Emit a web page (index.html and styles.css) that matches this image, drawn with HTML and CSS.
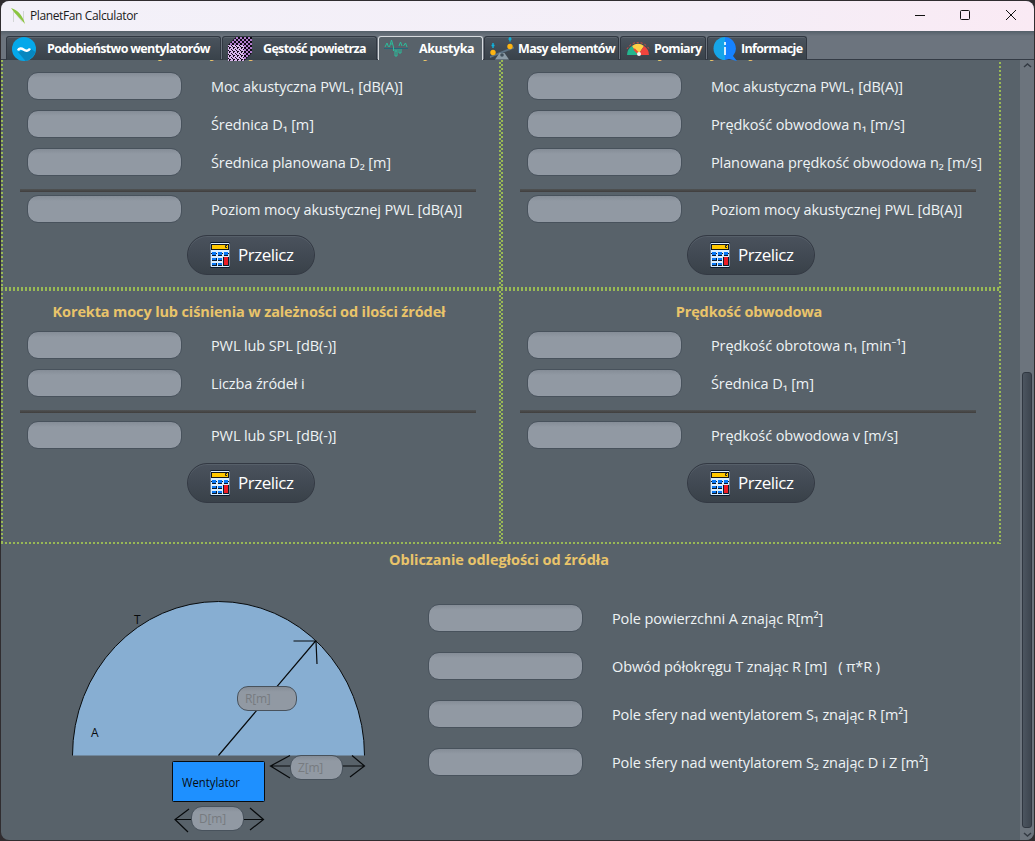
FILE: index.html
```html
<!DOCTYPE html>
<html lang="pl">
<head>
<meta charset="utf-8">
<title>PlanetFan Calculator</title>
<link rel="stylesheet" href="styles.css">
</head>
<body>
<svg class="defs" aria-hidden="true">
  <symbol id="calc" viewBox="0 0 22 28">
    <rect x="1" y="1" width="20" height="26" rx="1.500" fill="#0b1a2c"/>
    <rect x="1.500" y="2" width="19" height="24" rx="1" fill="#d9edff"/>
    <rect x="2" y="3" width="18" height="6" fill="#10151c"/>
    <rect x="3" y="4" width="16" height="4" fill="#ffc800"/>
    <path d="M18 4.500h-1.500v2H18" stroke="#222" fill="none"/>
    <path d="M3 11h4v4H3zM9 11h4v4H9zM15 11h4v4h-4zM3 17h5v3H3zM9 17h4v3H9zM3 22h5v3H3zM9 22h4v3H9zM14 16h6v9h-6z" fill="#0b1a2c"/>
    <path d="M3 11h4v3H3zM9 11h4v3H9zM15 11h4v3h-4zM3 17h4v2H3zM9 17h4v2H9zM3 22h4v2H3zM9 22h4v2H9z" fill="#0878f5"/>
    <path d="M2 12h1v1H2zM7 12h1v1H7zM13 12h1v1h-1zM19 12h1v1h-1z" fill="#0b1a2c"/>
    <rect x="15" y="16" width="4" height="8" fill="#ed1c24"/>
  </symbol>
  <pattern id="mesh" width="4" height="4" patternUnits="userSpaceOnUse">
    <rect width="4" height="4" fill="#d9b6ea"/>
    <path d="M3 0h1v1H3zM0 1h1v1H0zM1 2h2v1H1zM1 3h1v1H1z" fill="#120a18"/>
  </pattern>
  <pattern id="meshdark" width="4" height="4" patternUnits="userSpaceOnUse">
    <rect width="4" height="4" fill="#0d0812"/>
    <path d="M0 0h2v2H0zM2 2h2v2H2z" fill="#b27dce"/>
  </pattern>
</svg>
<div class="window">
  <header class="titlebar">
    <svg class="logo" width="16" height="18" viewBox="0 0 16 18"><path d="M3.500 15V4M3.500 4l9 11M13.500 4v11" stroke="#d3d6d5" fill="none"/><path d="M1 1c7 2 12 8 14 16C12 13 6 8 1 1z" fill="#8bc53f"/></svg>
    <span class="app-name">PlanetFan Calculator</span>
    <svg class="controls" width="104" height="14" viewBox="0 0 104 14" fill="none" stroke="#111"><path d="M1 7.500h10"/><rect x="46.500" y="2.500" width="9" height="9" rx="1"/><path d="M92 2l10 10M102 2L92 12"/></svg>
  </header>
  <nav class="tabs">
    <div class="tab t1"><svg width="24" height="24" viewBox="0 0 24 24"><circle cx="12" cy="12" r="12" fill="#05a8ea"/><path d="M6 15l13-3 4.500 3c-2 5-6 8-10 9z" fill="#0787bf"/><path d="M6 13.500c1-2.500 3.500-2.500 5.500-1s5 2 6.500-1" fill="none" stroke="#fff" stroke-width="2.400"/></svg><span>Podobieństwo wentylatorów</span></div>
    <div class="tab t2"><svg width="24" height="24" viewBox="0 0 24 24"><path d="M8 0h16v16l-8 8V8H0z" fill="url(#meshdark)"/><path d="M0 8h16v16H0z" fill="url(#mesh)"/></svg><span>Gęstość powietrza</span></div>
    <div class="tab t3 active"><svg width="24" height="24" viewBox="0 0 24 24"><path d="M0 11.500h24" stroke="#25677a"/><path d="M1 10l2-4 1.500 4M5.500 10l2-7 2 7v4M15 9l1.500-4L18 9M19.500 9l2-3 1.500 4M11 12v7h2v-7M15 12v4h2v-4M6.500 7h2M11 14h2" fill="none" stroke="#2bbd9b"/></svg><span>Akustyka</span></div>
    <div class="tab t4"><svg width="24" height="24" viewBox="0 0 24 24"><path d="M0 19L24 9.500v2L0 21z" fill="#5b7284"/><path d="M9.500 16h5l4.500 6.500H5z" fill="#8b9ba6"/><circle cx="12" cy="18" r="1.800" fill="#40505c"/><circle cx="3" cy="15.500" r="2.700" fill="#ffb511"/><circle cx="20" cy="9.500" r="2.700" fill="#ffb511"/><path d="M3 6v5M1.500 8.500h3M20 0v4.500M18.500 2h3" stroke="#10b5df" stroke-width="1.400"/></svg><span>Masy elementów</span></div>
    <div class="tab t5"><svg width="24" height="24" viewBox="0 0 24 24"><path d="M1 18a11 11 0 0 1 5-9l6 9z" fill="#24b58e"/><path d="M6 9a10 10 0 0 1 12 0l-6 9z" fill="#ffd046"/><path d="M18 9a11 11 0 0 1 5 9H12z" fill="#f0443d"/><path d="M1 12a12.500 12.500 0 0 1 22 0" fill="none" stroke="#e74c3c" stroke-dasharray="2 2"/><path d="M8 12l5 5" stroke="#e84a38" stroke-width="2"/><circle cx="13" cy="17" r="2" fill="#f0f7f8"/></svg><span>Pomiary</span></div>
    <div class="tab t6"><svg width="24" height="24" viewBox="0 0 24 24"><path d="M12 0a11.500 11.500 0 0 0 0 23z" fill="#16a5e8"/><path d="M12 0a11.500 11.500 0 0 1 8 19l4 5-8-2-4 1z" fill="#1682ff"/><path d="M12 5v3M12 10v8" stroke="#d8efff" stroke-width="2"/></svg><span>Informacje</span></div>
  </nav>
  <div class="body">
    <main class="view">
      <div class="grid">
        <section class="card upper">
          <h2>Korekta mocy akustycznej w zależności od średnicy</h2>
          <div class="row"><i class="field"></i><label>Moc akustyczna PWL₁ [dB(A)]</label></div>
          <div class="row"><i class="field"></i><label>Średnica D₁ [m]</label></div>
          <div class="row"><i class="field"></i><label>Średnica planowana D₂ [m]</label></div>
          <hr>
          <div class="row"><i class="field"></i><label>Poziom mocy akustycznej PWL [dB(A)]</label></div>
          <button><svg width="22" height="28"><use href="#calc"/></svg><span>Przelicz</span></button>
        </section>
        <section class="card upper right">
          <h2>Korekta mocy akustycznej w zależności od obrotów</h2>
          <div class="row"><i class="field"></i><label>Moc akustyczna PWL₁ [dB(A)]</label></div>
          <div class="row"><i class="field"></i><label>Prędkość obwodowa n₁ [m/s]</label></div>
          <div class="row"><i class="field"></i><label>Planowana prędkość obwodowa n₂ [m/s]</label></div>
          <hr>
          <div class="row"><i class="field"></i><label>Poziom mocy akustycznej PWL [dB(A)]</label></div>
          <button><svg width="22" height="28"><use href="#calc"/></svg><span>Przelicz</span></button>
        </section>
        <section class="card lower">
          <h2>Korekta mocy lub ciśnienia w zależności od ilości źródeł</h2>
          <div class="row"><i class="field"></i><label>PWL lub SPL [dB(-)]</label></div>
          <div class="row"><i class="field"></i><label>Liczba źródeł i</label></div>
          <hr>
          <div class="row"><i class="field"></i><label>PWL lub SPL [dB(-)]</label></div>
          <button><svg width="22" height="28"><use href="#calc"/></svg><span>Przelicz</span></button>
        </section>
        <section class="card lower right">
          <h2>Prędkość obwodowa</h2>
          <div class="row"><i class="field"></i><label>Prędkość obrotowa n₁ [min⁻¹]</label></div>
          <div class="row"><i class="field"></i><label>Średnica D₁ [m]</label></div>
          <hr>
          <div class="row"><i class="field"></i><label>Prędkość obwodowa v [m/s]</label></div>
          <button><svg width="22" height="28"><use href="#calc"/></svg><span>Przelicz</span></button>
        </section>
      </div>
      <section class="distance">
        <h2>Obliczanie odległości od źródła</h2>
        <div class="split">
          <div class="diagram">
            <svg width="340" height="250" viewBox="50 590 340 250">
              <path d="M72.500 755.500A146 154 0 0 1 364.500 755.500" fill="#87aed2" stroke="#080b0d"/>
              <g fill="none" stroke="#080b0d" stroke-width="1.200"><path d="M218.500 755.500L316 640.500M293.500 641h22.500l1 23"/><path d="M290 755.500l-19.500 10.500L290 778M270.500 766H364.500M352 755.500l12.500 10.500L350 777M189 809l-14 10.500L188 832M175 819.500h88M250 808l13.500 11.500L250 830"/></g>
              <rect x="172.500" y="761.500" width="92" height="40" rx="1" fill="#1e90ff" stroke="#080b0d"/>
              <g class="dtext"><text x="134" y="624">T</text><text x="91" y="737">A</text><text x="182" y="787" textLength="58" lengthAdjust="spacingAndGlyphs">Wentylator</text></g>
            </svg>
            <span class="field mini r">R[m]</span><span class="field mini z">Z[m]</span><span class="field mini d">D[m]</span>
          </div>
          <div class="results">
            <div class="row"><i class="field"></i><label>Pole powierzchni A znając R[m²]</label></div>
            <div class="row"><i class="field"></i><label class="pre">Obwód półokręgu T znając R [m]   ( π*R )</label></div>
            <div class="row"><i class="field"></i><label>Pole sfery nad wentylatorem S₁ znając R [m²]</label></div>
            <div class="row"><i class="field"></i><label>Pole sfery nad wentylatorem S₂ znając D i Z [m²]</label></div>
          </div>
        </div>
      </section>
    </main>
    <aside class="scroll">
      <svg width="9" height="5" viewBox="0 0 9 5"><path d="M1 4l3.500-3L8 4" fill="none" stroke="#333a43" stroke-width="1.500"/></svg>
      <div class="thumb"></div>
      <svg width="9" height="5" viewBox="0 0 9 5"><path d="M1 1l3.500 3L8 1" fill="none" stroke="#333a43" stroke-width="1.500"/></svg>
    </aside>
  </div>
</div>
</body>
</html>
```
FILE: styles.css
```css
* { box-sizing: border-box; }
body { margin: 0; width: 1035px; height: 841px; overflow: hidden; background: #302d30; font-family: "Open Sans", "Noto Sans", sans-serif; }
.defs { position: absolute; width: 0; height: 0; }
.window { margin: 1px; width: 1033px; height: 839px; border-radius: 8px; overflow: hidden; background: #58626a; display: flex; flex-direction: column; }
.titlebar { height: 30px; flex: none; background: linear-gradient(90deg, #f3f1f9, #f4eef7 70%, #faeaf4); display: flex; align-items: center; padding: 0 16px 0 9px; color: #1b1b1b; }
.app-name { margin: -1px 0 0 4px; font-size: 12px; letter-spacing: -0.38px; }
.controls { margin: -2px 0 0 auto; }
.tabs { height: 29px; flex: none; display: flex; gap: 1px; padding: 5px 5px 0; background: linear-gradient(#55606a, #6c747e 5px); border-bottom: 1px solid #343b45; }
.tab { height: 24px; display: flex; align-items: center; border: 1px solid #303741; border-bottom: 0; border-radius: 3px 3px 0 0; background: linear-gradient(#4a535d, #39424a); box-shadow: inset 0 1px #5a636c; color: #fff; font-size: 12.5px; font-weight: 700; letter-spacing: -0.66px; white-space: nowrap; padding-left: 5px; }
.tab svg { flex: none; margin-right: 11px; }
.t1 { width: 215px; }
.t2 { width: 155px; }
.t3 { width: 105px; letter-spacing: -0.45px; }
.t4 { width: 135px; }
.t5 { width: 86px; }
.t6 { width: 100px; }
.t4 svg, .t5 svg, .t6 svg { margin-right: 4px; }
.tab.active { background: #58626a; border-color: #d6dade; box-shadow: none; }
.body { flex: 1; display: flex; min-height: 0; }
.view { width: 1019px; overflow: hidden; }
.grid { display: grid; grid-template-columns: 500px 500px; grid-template-rows: 229px 255px; }
.card { display: flex; flex-direction: column; background:
  repeating-linear-gradient(90deg, #99b955 0 2px, transparent 2px 4px) 0 0 / 100% 2px no-repeat,
  repeating-linear-gradient(90deg, #99b955 0 2px, transparent 2px 4px) 0 100% / 100% 2px no-repeat,
  repeating-linear-gradient(#99b955 0 2px, transparent 2px 4px) 0 0 / 2px 100% no-repeat,
  repeating-linear-gradient(transparent 0 2px, #99b955 2px 4px) 100% 0 / 2px 100% no-repeat; }
.upper { overflow: hidden; background-position: 0 -2px, 0 100%, 0 0, 100% 0; }
h2 { margin: 0; height: 20px; line-height: 20px; font-size: 14.5px; font-weight: 700; text-align: center; color: #e9c46a; white-space: nowrap; letter-spacing: -0.13px; flex: none; }
.card h2 { width: 496px; }
.upper h2 { margin-top: -17px; }
.lower h2 { margin-top: 13px; }
.row { display: flex; align-items: center; height: 28px; flex: none; margin: 0 0 10px 26px; }
.upper h2 + .row { margin-top: 9px; }
.lower h2 + .row { margin-top: 9px; }
.field { display: block; flex: none; width: 155px; height: 28px; border: 1px solid #48525c; border-radius: 11px; background: linear-gradient(#858d97, #9199a3 5px); }
label { margin-left: 29px; font-size: 14.5px; letter-spacing: -0.11px; color: #eef3f5; white-space: nowrap; }
.pre { white-space: pre; }
hr { width: 456px; height: 3px; margin: 3px 0 3px 19px; border: 0; background: linear-gradient(#4f5253, #403e3d); flex: none; }
.lower hr { margin-bottom: 8px; }
hr + .row { margin-bottom: 12px; }
.lower hr + .row { margin-bottom: 14px; }
button { width: 128px; height: 40px; margin-left: 186px; padding: 0 0 0 21px; display: flex; align-items: center; gap: 7px; border: 1px solid #333943; border-radius: 20px; background: linear-gradient(#4a525d, #394149); box-shadow: inset 0 1px #565f69; color: #fff; font: 17px "Open Sans", sans-serif; letter-spacing: -0.5px; flex: none; }
button span { margin-top: -2px; }
.distance h2 { width: 996px; margin-top: 6px; letter-spacing: -0.06px; }
.split { display: flex; height: 276px; }
.diagram { position: relative; margin: 20px 0 0 49px; width: 340px; height: 250px; }
.diagram > svg { display: block; }
.dtext { font-size: 12px; fill: #080b0d; }
.mini { position: absolute; height: 25px; padding-left: 7px; line-height: 24px; font-size: 12px; color: #777b80; letter-spacing: -0.2px; }
.r { left: 187px; top: 96px; width: 60px; }
.z { left: 240px; top: 165px; width: 53px; }
.d { left: 141px; top: 216px; width: 53px; }
.results { padding: 34px 0 0 38px; }
.results .row { margin: 0 0 20px; }
.scroll { width: 14px; display: flex; flex-direction: column; align-items: center; background: #6c747d; padding: 3px 0; }
.scroll svg { flex: none; }
.thumb { width: 10px; height: 456px; margin: auto 0 4px; border: 1px solid #303741; border-radius: 3px; background: linear-gradient(90deg, #4c5560, #3d454f); }
```
